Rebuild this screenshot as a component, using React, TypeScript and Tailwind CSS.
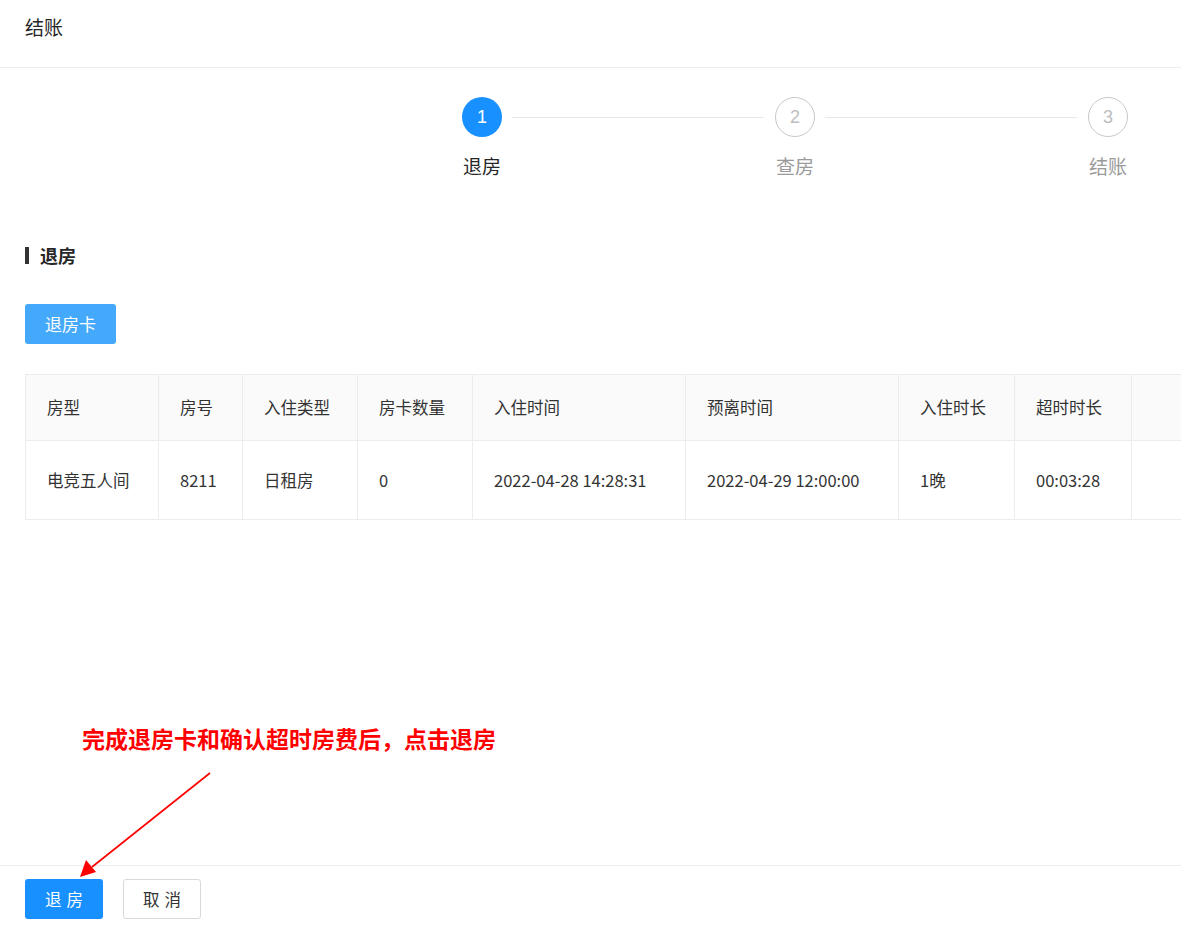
import React from "react"

const columns = [
  { title: "房型", width: 133, value: "电竞五人间" },
  { title: "房号", width: 84, value: "8211" },
  { title: "入住类型", width: 115, value: "日租房" },
  { title: "房卡数量", width: 115, value: "0" },
  { title: "入住时间", width: 213, value: "2022-04-28 14:28:31" },
  { title: "预离时间", width: 213, value: "2022-04-29 12:00:00" },
  { title: "入住时长", width: 116, value: "1晚" },
  { title: "超时时长", width: 117, value: "00:03:28" },
  { title: "", width: 120, value: "" },
]

const steps = [
  { n: "1", label: "退房", active: true },
  { n: "2", label: "查房", active: false },
  { n: "3", label: "结账", active: false },
]

export default function App() {
  return (
    <div
      className="relative flex h-[926px] w-[1181px] flex-col overflow-hidden bg-white"
      style={{ fontFamily: '"Noto Sans CJK SC", "Liberation Sans", sans-serif' }}
    >
      <div className="h-[68px] shrink-0 border-b border-[#ececec] px-[25px] pt-[12px]">
        <h1 className="text-[19px] leading-[29px] text-[#262626]">结账</h1>
      </div>

      <div className="flex-1">
        {/* steps */}
        <div className="flex pl-[462px] pt-[29px]">
          {steps.map((s, i) => (
            <div key={s.n} className={i < 2 ? "w-[313px] shrink-0" : "shrink-0"}>
              <div className="flex items-center">
                <div
                  className={
                    s.active
                      ? "flex h-[40px] w-[40px] items-center justify-center rounded-full bg-[#1890ff] text-[18px] text-white"
                      : "flex h-[40px] w-[40px] items-center justify-center rounded-full border border-[#c8c8c8] text-[18px] text-[#bdbdbd]"
                  }
                  style={{ fontFamily: '"Liberation Sans", sans-serif' }}
                >
                  {s.n}
                </div>
                {i < 2 && <div className="ml-[10px] mr-[11px] h-px flex-1 bg-[#e8e8e8]" />}
              </div>
              <div
                className={
                  s.active
                    ? "mt-[15px] w-[40px] text-center text-[19px] leading-[28px] text-[#262626]"
                    : "mt-[15px] w-[40px] text-center text-[19px] leading-[28px] text-[#9a9a9a]"
                }
              >
                <span className="whitespace-nowrap">{s.label}</span>
              </div>
            </div>
          ))}
        </div>

        {/* section title */}
        <div className="mt-[62px] flex items-center px-[25px]">
          <div className="h-[17px] w-[4px] bg-[#333]" />
          <span className="ml-[11px] text-[18px] font-bold leading-[26px] text-[#262626]">退房</span>
        </div>

        <div className="mt-[36px] px-[25px]">
          <button className="h-[40px] w-[91px] rounded-[3px] bg-[#45a9fb] text-[17px] text-white">
            退房卡
          </button>
        </div>

        {/* table */}
        <div className="mt-[30px] pl-[25px]">
          <table className="border-collapse text-[16.5px] text-[#333]">
            <thead>
              <tr className="h-[66px] bg-[#fafafa]">
                {columns.map((c, i) => (
                  <th
                    key={i}
                    className="border border-[#ececec] pl-[21px] text-left font-normal"
                    style={{ width: c.width, minWidth: c.width }}
                  >
                    {c.title}
                  </th>
                ))}
              </tr>
            </thead>
            <tbody>
              <tr className="h-[79px]">
                {columns.map((c, i) => (
                  <td key={i} className="border border-[#ececec] pl-[21px] whitespace-nowrap">
                    {c.value}
                  </td>
                ))}
              </tr>
            </tbody>
          </table>
        </div>

        <p className="ml-[82px] mt-[202px] text-[23px] font-bold leading-[32px] text-[#ff0000]">
          完成退房卡和确认超时房费后，点击退房
        </p>
      </div>

      {/* footer */}
      <div className="flex h-[61px] shrink-0 items-start gap-[20px] border-t border-[#ececec] px-[25px] pt-[13px]">
        <button className="h-[40px] w-[78px] rounded-[3px] bg-[#1890ff] pl-[5px] text-[16.5px] tracking-[0.3em] text-white">
          退房
        </button>
        <button className="h-[40px] w-[78px] rounded-[3px] border border-[#d9d9d9] bg-white pl-[5px] text-[16.5px] tracking-[0.3em] text-[#333]">
          取消
        </button>
      </div>

      {/* annotation arrow */}
      <svg className="pointer-events-none absolute left-0 top-0" width="1181" height="926">
        <line x1="210" y1="773" x2="92" y2="867" stroke="#ff0000" strokeWidth="1.6" />
        <polygon points="80,877 86,860 96,872" fill="#ff0000" />
      </svg>
    </div>
  )
}
